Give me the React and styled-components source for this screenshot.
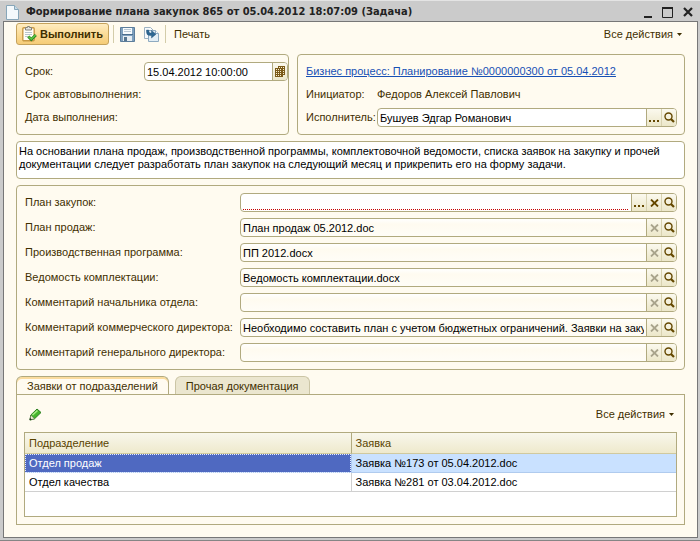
import React, { useState } from "react";
import styled, { createGlobalStyle, css } from "styled-components";

const line = "#b1aa7f";
const cream = "#fffbf0";
const brown = "#3f2f00";
const font = '11px/13px "Liberation Sans", Arial, sans-serif';

const GlobalStyle = createGlobalStyle`
  *, *::before, *::after { box-sizing: border-box; }
  body { margin: 0; background: #cbcbcb; color: ${brown}; font: ${font}; }
  button, input, textarea { font: inherit; color: inherit; margin: 0; }
  button { padding: 0; border: 0; background: none; cursor: pointer; }
  svg { display: block; flex: none; }
`;

const Window = styled.main`
  display: flex;
  flex-direction: column;
  min-height: 100vh;
  padding: 0 2px 2px 3px;
  background: #cbcbcb;
  border-top: 1px solid #e4e4e4;
  border-bottom: 1px solid #858585;
`;

const TitleBar = styled.header`
  display: flex;
  align-items: center;
  gap: 7px;
  height: 20px;
  padding: 2px 5px 0 3px;
  color: #222;
`;

const Title = styled.h1`
  flex: 1;
  margin: 0;
  font-family: "DejaVu Sans Condensed", "DejaVu Sans", sans-serif;
  font-size: 11px;
  line-height: 14px;
  white-space: nowrap;
  overflow: hidden;
`;

const WindowButtons = styled.div`
  display: flex;
  gap: 10px;
`;

const Client = styled.div`
  flex: 1;
  display: flex;
  flex-direction: column;
  gap: 6px;
  padding: 1px 12px;
  padding-bottom: 12px;
  background: ${cream};
  border: 1px solid #777;
`;

const Toolbar = styled.div`
  display: flex;
  align-items: center;
  height: 22px;
  margin-bottom: 3px;
`;

const PrimaryButton = styled.button`
  display: flex;
  align-items: center;
  gap: 3px;
  height: 22px;
  padding: 0 5px;
  border: 1px solid #c5a25c;
  border-radius: 3px;
  background: linear-gradient(#ffecc0, #fbdc98 50%, #f6cc77);
  font-weight: bold;
`;

const Divider = styled.span`
  width: 1px;
  height: 18px;
  margin: 0 ${(p) => p.$after || 6}px 0 ${(p) => p.$before || 4}px;
  background: #d3cca9;
`;

const ToolButton = styled.button`
  display: flex;
  align-items: center;
  justify-content: center;
  min-width: 16px;
  height: 18px;
  margin-right: ${(p) => p.$gap || 0}px;
`;

const MenuButton = styled.button`
  display: flex;
  align-items: center;
  gap: 4px;
  margin-left: auto;
  padding-right: 3px;
`;

const Columns = styled.div`
  display: grid;
  grid-template-columns: minmax(0, 273fr) minmax(0, 388fr);
  gap: 8px;
`;

const Group = styled.section`
  display: grid;
  grid-template-columns: ${(p) => p.$label}px minmax(0, 1fr);
  grid-auto-rows: 19px;
  row-gap: ${(p) => p.$gap}px;
  align-items: center;
  padding: 7px ${(p) => p.$right}px 7px 8px;
  border: 1px solid ${line};
  border-radius: 4px;
`;

const Label = styled.label`
  white-space: nowrap;
`;

const Value = styled.span`
  white-space: nowrap;
`;

const ProcessLink = styled.a`
  grid-column: 1 / -1;
  justify-self: start;
  color: #1750b5;
  white-space: nowrap;
`;

const FieldBox = styled.div`
  display: flex;
  height: 19px;
  border: 1px solid ${line};
  border-radius: 4px;
  background: ${(p) => (p.$readOnly ? "linear-gradient(#fff, #fffbf0 30%, #fffdf7)" : "#fff")};
  overflow: hidden;
`;

const Input = styled.input`
  flex: 1;
  min-width: 0;
  height: 17px;
  padding: 0;
  margin: 0 2px;
  border: 0;
  outline: 0;
  background: none;
  color: #000;
  ${(p) => p.$required && css`
    height: 16px;
    background: repeating-linear-gradient(90deg, #c40000 0 1px, #fff 1px 2px) bottom / 100% 1px no-repeat;
  `}
`;

const FieldButton = styled.button`
  display: flex;
  align-items: center;
  justify-content: center;
  width: 15px;
  flex: none;
  border-left: 1px solid ${(p) => (p.$inner ? "#d8d2b0" : line)};
  background: linear-gradient(#fbf9ee, #ece7c9);
  color: ${(p) => (p.disabled ? "#a9a48c" : "#654800")};
`;

const Description = styled.textarea`
  display: block;
  width: 100%;
  height: 38px;
  padding: 3px 2px;
  border: 1px solid ${line};
  border-radius: 4px;
  outline: 0;
  resize: none;
  overflow: hidden;
  background: #fff;
  color: #000;
`;

const Tabs = styled.div`
  flex: 1;
  display: flex;
  flex-direction: column;
`;

const TabStrip = styled.div`
  display: flex;
  align-items: flex-end;
  gap: 6px;
  height: 19px;
  margin-bottom: -1px;
`;

const Tab = styled.button`
  height: 19px;
  padding: 1px 10px 0;
  border: 1px solid ${(p) => (p.$active ? line : "#cbc5a5")};
  border-bottom-color: ${(p) => (p.$active ? cream : line)};
  border-radius: 6px 6px 0 0;
  background: ${(p) => (p.$active ? cream : "#ebe6cf")};
  box-shadow: ${(p) => (p.$active ? "inset 0 2px #fbdc9e" : "none")};
  white-space: nowrap;
`;

const TabPanel = styled.div`
  flex: 1;
  display: flex;
  flex-direction: column;
  padding: 7px;
  border: 1px solid ${line};
`;

const PanelBar = styled.div`
  display: flex;
  align-items: center;
  height: 24px;
  margin-bottom: 6px;
  padding-left: 3px;
`;

const GridFrame = styled.div`
  flex: 1;
  min-height: 84px;
  border: 1px solid ${line};
  background: #fff;
`;

const Table = styled.table`
  width: 100%;
  table-layout: fixed;
  border-collapse: separate;
  border-spacing: 0;
  color: #000;
`;

const HeadCell = styled.th`
  height: 21px;
  padding: 0 4px;
  border-bottom: 1px solid #d0c99f;
  border-left: ${(p) => (p.$first ? "0" : `1px solid ${line}`)};
  background: linear-gradient(#f8f7ec, #eee9cc);
  color: #594300;
  font-weight: normal;
  text-align: left;
`;

const Cell = styled.td`
  height: 19px;
  padding: 0 4px;
  border-bottom: 1px solid #d0d0d0;
  border-left: ${(p) => (p.$first ? "0" : "1px solid #d0d0d0")};
  ${(p) => p.$selected && css`background: #c9e1ff; border-color: #b0cbee;`}
  ${(p) => p.$current && css`background: #4f69c1; color: #fff; outline: 1px dotted #e6ecff; outline-offset: -1px;`}
`;

const Caret = () => (
  <svg width="5" height="3" viewBox="0 0 5 3"><path d="M0 0h5L2.5 3z" fill={brown} /></svg>
);

const PageIcon = () => (
  <svg width="13" height="15" viewBox="0 0 13 15">
    <path d="M.5.5h8l4 4v10H.5z" fill="#f4f9fc" stroke="#87a6b9" />
    <path d="M8.500.5v4h4" fill="#c7dbe7" stroke="#87a6b9" />
  </svg>
);

const ClipboardIcon = () => (
  <svg width="15" height="16" viewBox="0 0 15 16">
    <rect x=".8" y="1.800" width="11.400" height="13" rx="1" fill="#fffdf6" stroke="#c99a45" strokeWidth="1.400" />
    <path d="M3.500 1.500h2v-1h2v1h2v2.500h-6z" fill="#e4e4e0" stroke="#85857c" />
    <path d="M3 6.500h7M3 8.500h7M3 10.500h3" stroke="#b7c4cc" />
    <path d="M6.300 10.500l3 3L13.800 9" fill="none" stroke="#2c7f22" strokeWidth="3" />
    <path d="M6.500 10.500l2.800 2.700L13.600 9" fill="none" stroke="#58c943" strokeWidth="1.500" />
  </svg>
);

const SaveIcon = () => (
  <svg width="15" height="15" viewBox="0 0 15 15">
    <path d="M.5.5h14v14h-14z" fill="#7ea0be" stroke="#5c7d9b" />
    <path d="M3 1h9v6H3z" fill="#f6fafc" />
    <path d="M4 2.500h7M4 4.500h7" stroke="#b9c8d4" />
    <path d="M2 7.500h11" stroke="#4b6d8d" />
    <path d="M3 9h9v5H3z" fill="#e6edf2" />
    <path d="M4 10h3v4H4z" fill="#56758f" />
  </svg>
);

const CopyIcon = () => (
  <svg width="15" height="15" viewBox="0 0 15 15">
    <path d="M.5.5h6l3 3v8h-9z" fill="#f7fafc" stroke="#9db2c2" />
    <path d="M4.500 3.500h7l3 3v8h-10z" fill="#e3eef5" stroke="#8eaac0" />
    <path d="M11.500 3.500v3h3" fill="#fff" stroke="#8eaac0" />
    <path d="M2.500 3v2Q2.500 8.500 6 8.500h1.500V11L12 7.200 7.500 3.500V6H6Q4.700 6 4.700 3z" fill="#2d6792" stroke="#1b4b75" strokeWidth=".4" />
  </svg>
);

const CalendarIcon = () => (
  <svg width="10" height="11" viewBox="0 0 10 11">
    <path d="M3 0h7v9H8v2H0V2h3z" fill="#7b5a18" />
    <path d="M4 1h1v1H4zm2 0h1v1H6zm2 0h1v1H8zM1 3h1v1H1zm2 0h1v1H3zm2 0h1v1H5zm3 0h1v1H8zM1 5h1v1H1zm2 0h1v1H3zm2 0h1v1H5zm3 0h1v1H8zM1 7h1v1H1zm2 0h1v1H3zm2 0h1v1H5zm3 0h1v1H8zM1 9h1v1H1zm2 0h1v1H3zm2 0h1v1H5z" fill="#f8efcd" />
  </svg>
);

const SearchIcon = () => (
  <svg width="11" height="11" viewBox="0 0 11 11" fill="none" stroke="#654800">
    <circle cx="4.500" cy="4.500" r="3.500" strokeWidth="1.400" />
    <path d="M7 7l3 3" strokeWidth="2.200" />
  </svg>
);

const CrossIcon = () => (
  <svg width="9" height="8" viewBox="0 0 9 8">
    <path d="M1 .5l7 7M8 .5l-7 7" stroke="currentColor" strokeWidth="1.800" />
  </svg>
);

const DotsIcon = () => (
  <svg width="10" height="11" viewBox="0 0 10 11">
    <path d="M0 8h2v2H0zm4 0h2v2H4zm4 0h2v2H8z" fill="#654800" />
  </svg>
);

const PencilIcon = () => (
  <svg width="13" height="13" viewBox="0 0 13 13">
    <path d="M8 1l4 3.500-6.500 6.300L1 12l.8-5z" fill="#45b52d" stroke="#2c7f20" />
    <path d="M3.500 7l5-4.500" stroke="#a8eb87" strokeWidth="1.600" />
    <path d="M1.800 7l3.700 3.800L1 12z" fill="#f0ecd5" stroke="#4b6b3b" strokeWidth=".6" />
    <path d="M1 10l2 1.500-2.500.7z" fill="#222" />
  </svg>
);

const MinimizeIcon = () => (
  <svg width="8" height="12" viewBox="0 0 8 12"><path d="M0 10h8v2H0z" fill="#222" /></svg>
);

const MaximizeIcon = () => (
  <svg width="11" height="12" viewBox="0 0 11 12">
    <path d="M.5 1.500h10v10H.5z" fill="none" stroke="#222" /><path d="M0 1h11v2H0z" fill="#222" />
  </svg>
);

const CloseIcon = () => (
  <svg width="10" height="10" viewBox="0 0 10 10"><path d="M1 1l8 8M9 1L1 9" stroke="#222" strokeWidth="2.200" /></svg>
);

const buttonKinds = {
  choose: ["Выбрать", DotsIcon],
  clear: ["Очистить", CrossIcon],
  open: ["Открыть", SearchIcon],
  calendar: ["Календарь", CalendarIcon],
};

function Field({ id, label, value, readOnly, required, buttons }) {
  return (
    <>
      <Label htmlFor={id}>{label}</Label>
      <FieldBox $readOnly={readOnly}>
        <Input id={id} defaultValue={value} readOnly={readOnly} $required={required} />
        {buttons.map((kind, i) => {
          const [name, Icon] = buttonKinds[kind];
          return (
            <FieldButton key={kind} type="button" aria-label={name} $inner={i > 0} disabled={readOnly && kind === "clear"}>
              <Icon />
            </FieldButton>
          );
        })}
      </FieldBox>
    </>
  );
}

const documents = [
  { id: "purchase", label: "План закупок:", value: "", required: true },
  { id: "sales", label: "План продаж:", value: "План продаж 05.2012.doc" },
  { id: "production", label: "Производственная программа:", value: "ПП 2012.docx" },
  { id: "parts", label: "Ведомость комплектации:", value: "Ведомость комплектации.docx" },
  { id: "head", label: "Комментарий начальника отдела:", value: "" },
  {
    id: "commercial",
    label: "Комментарий коммерческого директора:",
    value: "Необходимо составить план с учетом бюджетных ограничений. Заявки на закупку",
  },
  { id: "general", label: "Комментарий генерального директора:", value: "" },
];

const requests = [
  ["Отдел продаж", "Заявка №173 от 05.04.2012.doc"],
  ["Отдел качества", "Заявка №281 от 03.04.2012.doc"],
];

const tabs = ["Заявки от подразделений", "Прочая документация"];

export default function App() {
  const [tab, setTab] = useState(0);
  const [row, setRow] = useState(0);
  return (
    <Window>
      <GlobalStyle />
      <TitleBar>
        <PageIcon />
        <Title>Формирование плана закупок 865 от 05.04.2012 18:07:09 (Задача)</Title>
        <WindowButtons>
          <button type="button" aria-label="Свернуть"><MinimizeIcon /></button>
          <button type="button" aria-label="Развернуть"><MaximizeIcon /></button>
          <button type="button" aria-label="Закрыть"><CloseIcon /></button>
        </WindowButtons>
      </TitleBar>
      <Client>
        <Toolbar>
          <PrimaryButton type="button"><ClipboardIcon />Выполнить</PrimaryButton>
          <Divider />
          <ToolButton type="button" aria-label="Записать" $gap={8}><SaveIcon /></ToolButton>
          <ToolButton type="button" aria-label="Скопировать"><CopyIcon /></ToolButton>
          <Divider $before={5} $after={8} />
          <ToolButton type="button">Печать</ToolButton>
          <MenuButton type="button">Все действия <Caret /></MenuButton>
        </Toolbar>
        <Columns>
          <Group $label={119} $gap={4} $right={0}>
            <Field id="term" label="Срок:" value="15.04.2012 10:00:00" buttons={["calendar"]} />
            <Label as="span">Срок автовыполнения:</Label><Value />
            <Label as="span">Дата выполнения:</Label><Value />
          </Group>
          <Group $label={71} $gap={4} $right={7}>
            <ProcessLink href="#process">Бизнес процесс: Планирование №0000000300 от 05.04.2012</ProcessLink>
            <Label as="span">Инициатор:</Label><Value>Федоров Алексей Павлович</Value>
            <Field id="assignee" label="Исполнитель:" value="Бушуев Эдгар Романович" buttons={["choose", "open"]} />
          </Group>
        </Columns>
        <Description
          aria-label="Описание задачи"
          defaultValue="На основании плана продаж, производственной программы, комплектовочной ведомости, списка заявок на закупку и прочей документации следует разработать план закупок на следующий месяц и прикрепить его на форму задачи."
        />
        <Group $label={215} $gap={6} $right={7}>
          {documents.map((d) => (
            <Field key={d.id} {...d} readOnly={!d.required} buttons={d.required ? ["choose", "clear", "open"] : ["clear", "open"]} />
          ))}
        </Group>
        <Tabs>
          <TabStrip role="tablist">
            {tabs.map((name, i) => (
              <Tab key={name} type="button" role="tab" aria-selected={tab === i} $active={tab === i} onClick={() => setTab(i)}>
                {name}
              </Tab>
            ))}
          </TabStrip>
          <TabPanel role="tabpanel">
            <PanelBar>
              <ToolButton type="button" aria-label="Изменить"><PencilIcon /></ToolButton>
              <MenuButton type="button">Все действия <Caret /></MenuButton>
            </PanelBar>
            <GridFrame>
              <Table>
                <thead>
                  <tr><HeadCell $first>Подразделение</HeadCell><HeadCell>Заявка</HeadCell></tr>
                </thead>
                <tbody>
                  {requests.map(([unit, doc], i) => (
                    <tr key={doc} onClick={() => setRow(i)}>
                      <Cell $first $selected={row === i} $current={row === i}>{unit}</Cell>
                      <Cell $selected={row === i}>{doc}</Cell>
                    </tr>
                  ))}
                </tbody>
              </Table>
            </GridFrame>
          </TabPanel>
        </Tabs>
      </Client>
    </Window>
  );
}
